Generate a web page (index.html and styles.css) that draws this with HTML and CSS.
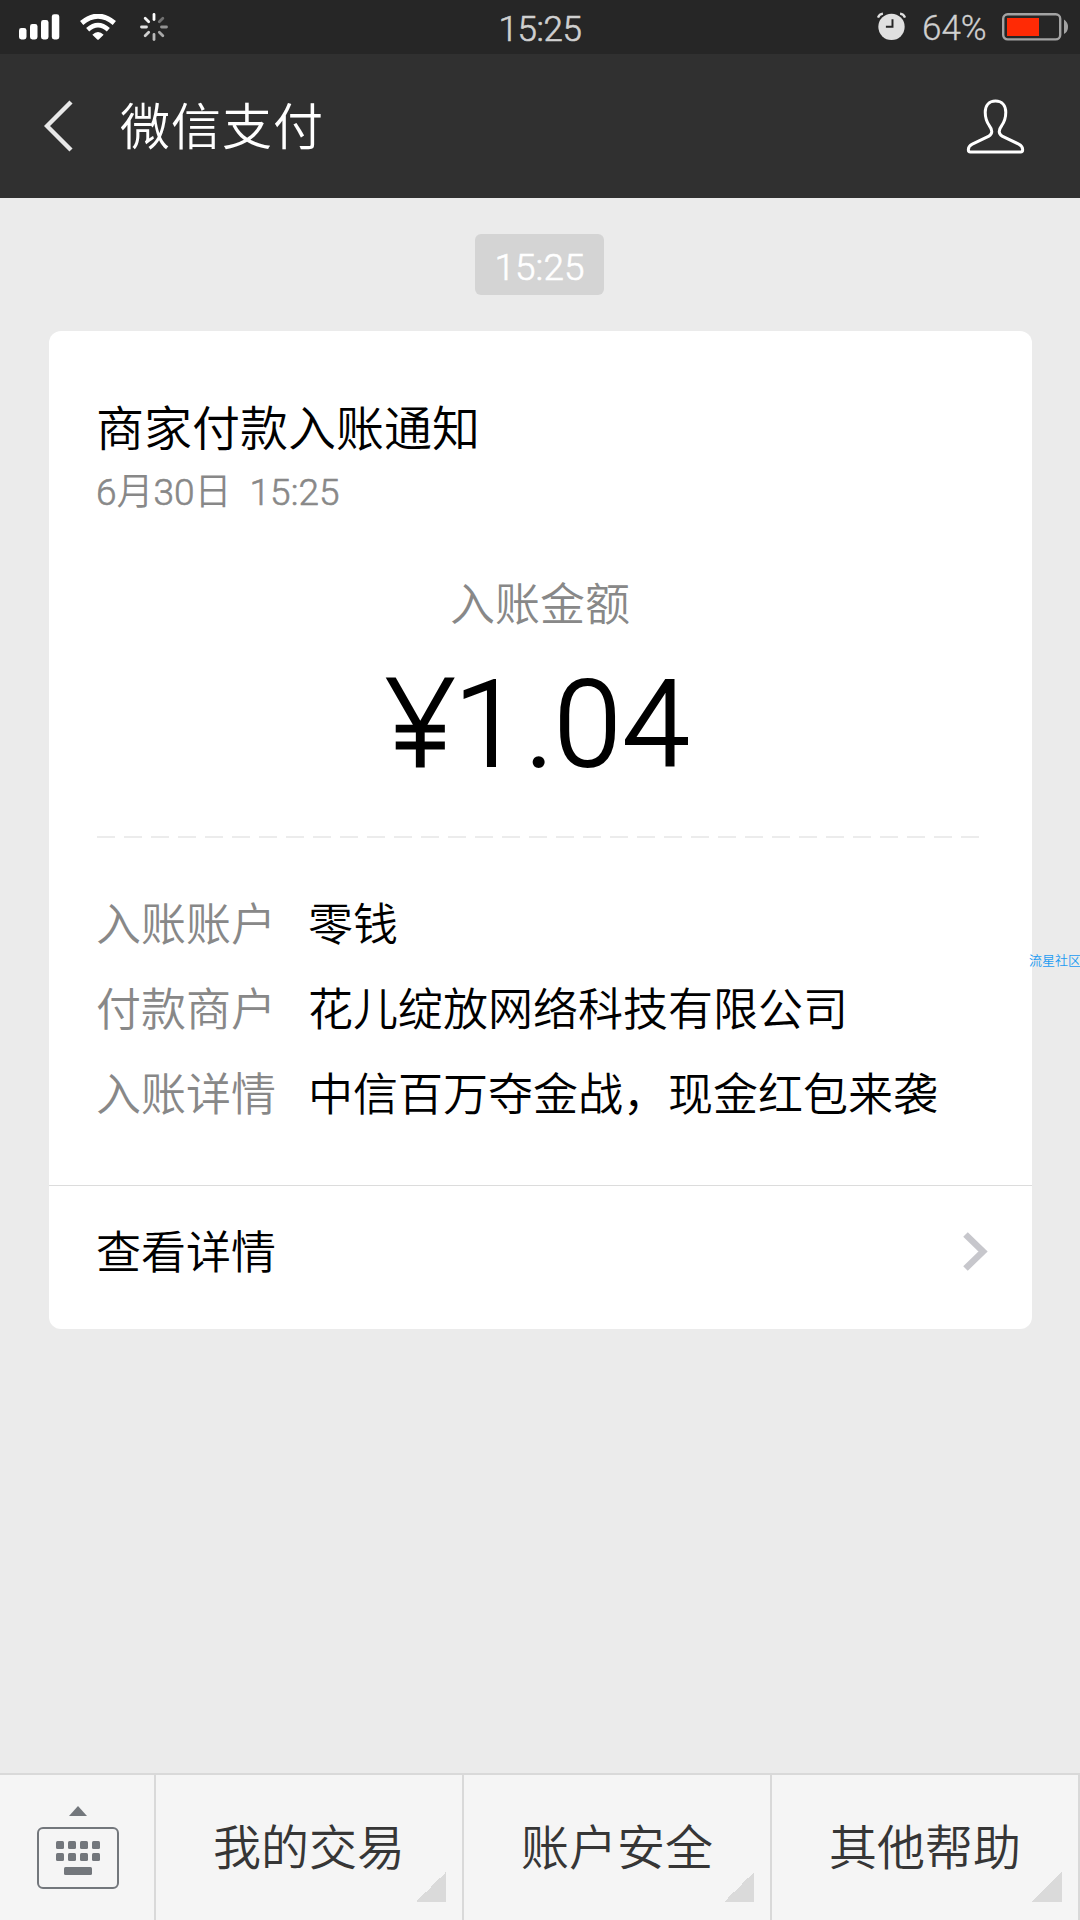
FILE: index.html
```html
<!DOCTYPE html>
<html lang="zh-CN">
<head>
<meta charset="utf-8">
<title>微信支付</title>
<link rel="stylesheet" href="styles.css">
</head>
<body>
<div class="screen">
  <div class="status">
    <div class="status-left">
      <svg class="signal" viewBox="0 0 41 26"><rect x="0" y="14" width="7.5" height="11.5" rx="2.4"/><rect x="11" y="10" width="7.5" height="15.5" rx="2.4"/><rect x="22" y="6" width="7.5" height="19.5" rx="2.4"/><rect x="32.8" y="0.3" width="7.5" height="25.2" rx="2.4"/></svg>
      <svg class="wifi" viewBox="0 0 108 78"><path d="M5 27Q54-14 103 27" stroke-width="15"/><path d="M23 47Q54 20 85 47" stroke-width="14"/><path class="dot" d="M37 62Q54 46 71 62L57 76Q54 79 51 76Z"/></svg>
      <svg class="spinner" viewBox="-14 -14 28 28"><path d="M0-12.5V-7.5" opacity="1"/><path d="M0-12.5V-7.5" opacity=".35" transform="rotate(45)"/><path d="M0-12.5V-7.5" opacity=".5" transform="rotate(90)"/><path d="M0-12.5V-7.5" opacity=".6" transform="rotate(135)"/><path d="M0-12.5V-7.5" opacity=".68" transform="rotate(180)"/><path d="M0-12.5V-7.5" opacity=".78" transform="rotate(225)"/><path d="M0-12.5V-7.5" opacity=".86" transform="rotate(270)"/><path d="M0-12.5V-7.5" opacity=".95" transform="rotate(315)"/></svg>
    </div>
    <div class="clock">15:25</div>
    <div class="status-right">
      <svg class="alarm" viewBox="0 0 88 86"><circle cx="44" cy="44" r="40"/><path class="bell" d="M3 16Q7 5 18 4M70 4Q81 5 85 16"/><path class="hands" d="M47 21V44H27"/></svg>
      <span class="percent">64%</span>
      <svg class="battery" viewBox="0 0 67 28"><rect class="shell" x="1.2" y="1.2" width="57" height="25.2" rx="4.5"/><rect class="charge" x="5" y="5" width="32" height="18"/><path class="nub" d="M62 6.500Q66 9 66 14T62 21Z"/></svg>
    </div>
  </div>

  <div class="header">
    <svg class="back" viewBox="0 0 30 52"><path d="M27 2L3 26L27 50"/></svg>
    <h1 class="title">微信支付</h1>
    <svg class="person" viewBox="380 295 176 166"><path d="M468 301C448 301 437 315 437 335C437 352 440 362 449 375C459 388 460 400 448 407L398 431C388 436 386 441 386 448C386 453 388 455 392 455H544C548 455 550 453 550 448C550 441 548 436 538 431L488 407C476 400 477 388 487 375C496 362 499 352 499 335C499 315 488 301 468 301Z"/></svg>
  </div>

  <div class="chat">
    <div class="stamp">15:25</div>
    <div class="card">
      <div class="card-body">
        <h2 class="card-title">商家付款入账通知</h2>
        <div class="date"><span><span class="num">6</span>月<span class="num">30</span>日</span><span class="date-time num">15:25</span></div>
        <div class="amount-label">入账金额</div>
        <div class="amount"><span class="yen">¥</span><span class="one">1</span><span>.</span><span class="cents">04</span></div>
        <div class="dashes"></div>
        <dl class="details">
          <dt>入账账户</dt><dd>零钱</dd>
          <dt>付款商户</dt><dd>花儿绽放网络科技有限公司</dd>
          <dt>入账详情</dt><dd>中信百万夺金战，现金红包来袭</dd>
        </dl>
      </div>
      <div class="card-link">
        <span>查看详情</span>
        <svg class="chevron" viewBox="0 0 25 39"><path d="M2.500 2.500L20 19.500L2.500 36.500"/></svg>
      </div>
    </div>
    <div class="watermark">流星社区</div>
  </div>

  <div class="tabs">
    <div class="keyboard-cell">
      <svg class="keyboard" viewBox="0 0 82 84"><path d="M32 11L41 1L50 11Z"/><rect class="frame" x="1" y="23" width="80" height="60" rx="5"/><g><rect x="19" y="36" width="8" height="8" rx="1.500"/><rect x="31" y="36" width="8" height="8" rx="1.500"/><rect x="43" y="36" width="8" height="8" rx="1.500"/><rect x="55" y="36" width="8" height="8" rx="1.500"/><rect x="19" y="48" width="8" height="8" rx="1.500"/><rect x="31" y="48" width="8" height="8" rx="1.500"/><rect x="43" y="48" width="8" height="8" rx="1.500"/><rect x="55" y="48" width="8" height="8" rx="1.500"/><rect x="27" y="62" width="28" height="8" rx="1.500"/></g></svg>
    </div>
    <div class="tab">我的交易</div>
    <div class="tab">账户安全</div>
    <div class="tab">其他帮助</div>
  </div>
</div>
</body>
</html>
```
FILE: styles.css
```css
* { box-sizing: border-box; }
body, h1, h2, dl, dd { margin: 0; }
body {
  font-family: "Open Sans", "Noto Sans CJK SC", sans-serif;
  font-weight: 350;
  background: #ebebeb;
}
h1, h2 { font-weight: 350; }
svg { display: block; fill: none; flex: none; }
.num, .clock, .percent, .stamp, .amount {
  font-family: Roboto, sans-serif;
  font-weight: 300;
  -webkit-text-stroke: 0.6px currentColor;
}

.screen {
  width: 1080px;
  height: 1920px;
  display: flex;
  flex-direction: column;
  overflow: hidden;
}

/* status bar */
.status {
  height: 54px;
  background: #262626;
  color: #d0d0d0;
  display: grid;
  grid-template-columns: 1fr auto 1fr;
  font-size: 35px;
  line-height: 54px;
}
.status-left { display: flex; padding-left: 19px; }
.signal { width: 41px; height: 26px; margin-top: 14px; fill: #fff; }
.wifi { width: 36px; height: 26px; margin: 14px 0 0 20px; stroke: #fff; }
.wifi .dot { fill: #fff; stroke: none; }
.spinner { width: 28px; height: 28px; margin: 13px 0 0 24px; stroke: #fff; stroke-width: 2.8; stroke-linecap: round; }
.clock { padding-top: 3px; letter-spacing: -0.4px; }
.status-right { display: flex; justify-content: flex-end; padding-right: 11px; }
.alarm { width: 29px; height: 29px; margin-top: 12px; fill: #e0e0e0; }
.alarm .bell { fill: none; stroke: #e0e0e0; stroke-width: 7; }
.alarm .hands { fill: none; stroke: #262626; stroke-width: 6; }
.percent { margin-left: 16px; width: 80px; padding-top: 2px; -webkit-text-stroke-width: 0.3px; }
.battery { width: 67px; height: 28px; margin-top: 13px; }
.shell { stroke: #a3a3a3; stroke-width: 2.4; }
.charge { fill: #ff2a05; }
.nub { fill: #a3a3a3; }

/* navigation header */
.header {
  height: 144px;
  background: #303030;
  display: flex;
  align-items: center;
  padding: 0 55px 0 44px;
}
.back { width: 30px; height: 52px; stroke: #e8e8e8; stroke-width: 4.4; }
.title {
  margin-left: 46px;
  flex: 1;
  color: #fff;
  font-size: 50px;
  line-height: 60px;
  letter-spacing: 1px;
}
.person { width: 59px; height: 55px; stroke: #fff; stroke-width: 9; }

/* conversation */
.chat { position: relative; flex: 1; padding: 36px 48px 0; }
.stamp {
  width: 129px;
  height: 61px;
  margin-left: 427px;
  padding-top: 3px;
  border-radius: 6px;
  background: #d4d4d4;
  color: #fff;
  font-size: 37px;
  line-height: 61px;
  text-align: center;
}
.card {
  margin: 36px 0 0 1px;
  width: 983px;
  height: 998px;
  border-radius: 12px;
  background: #fff;
  color: #000;
}
.card-body { height: 854px; padding: 73px 48px 0 47px; }
.card-title { font-size: 48px; line-height: 48px; }
.date {
  display: flex;
  align-items: baseline;
  height: 44px;
  margin-top: 17px;
  color: #888;
  font-size: 37px;
  line-height: 44px;
}
.date-time { margin-left: 18px; }
.amount-label {
  margin-top: 66px;
  color: #888;
  font-size: 45px;
  line-height: 50px;
  text-align: center;
}
.amount {
  display: flex;
  justify-content: center;
  align-items: baseline;
  height: 120px;
  margin-top: 30px;
  padding-right: 4px;
  font-size: 121px;
  line-height: 120px;
  -webkit-text-stroke-width: 2px;
}
.yen { font-family: "Open Sans", sans-serif; -webkit-text-stroke-width: 3px; }
.one { margin: 0 4px 0 -1px; }
.cents { letter-spacing: 1px; }
.dashes {
  margin-top: 57px;
  height: 2px;
  width: 883px;
  margin-left: 1px;
  background: repeating-linear-gradient(90deg, #ececec 0 18px, transparent 18px 27px);
}
.details {
  display: grid;
  grid-template-columns: 212px 1fr;
  margin-top: 43px;
  font-size: 45px;
  line-height: 85px;
}
.details dt { color: #888; }
.card-link {
  height: 144px;
  border-top: 1px solid #dcdcdc;
  padding: 0 44px 16px 47px;
  display: flex;
  align-items: center;
  justify-content: space-between;
  font-size: 45px;
}
.chevron { width: 25px; height: 39px; margin-top: 4px; stroke: #c7c7cc; stroke-width: 6.5; }
.watermark {
  position: absolute;
  right: -1px;
  top: 752px;
  color: #1c9bf2;
  font-size: 13px;
  line-height: 20px;
}

/* bottom menu */
.tabs {
  height: 147px;
  display: flex;
  background: #f5f5f5;
  border-top: 2px solid #d9d9d9;
}
.keyboard-cell { width: 156px; padding: 30px 0 0 37px; border-right: 2px solid #d9d9d9; }
.keyboard { width: 82px; height: 84px; fill: #73777c; }
.frame { fill: none; stroke: #73777c; stroke-width: 2; }
.tab {
  width: 308px;
  border-right: 2px solid #d9d9d9;
  color: #363636;
  font-size: 48px;
  line-height: 143px;
  text-align: center;
  background: linear-gradient(135deg, transparent 50%, #dadada 50%) right 16px bottom 18px / 30px 30px no-repeat;
}
```
